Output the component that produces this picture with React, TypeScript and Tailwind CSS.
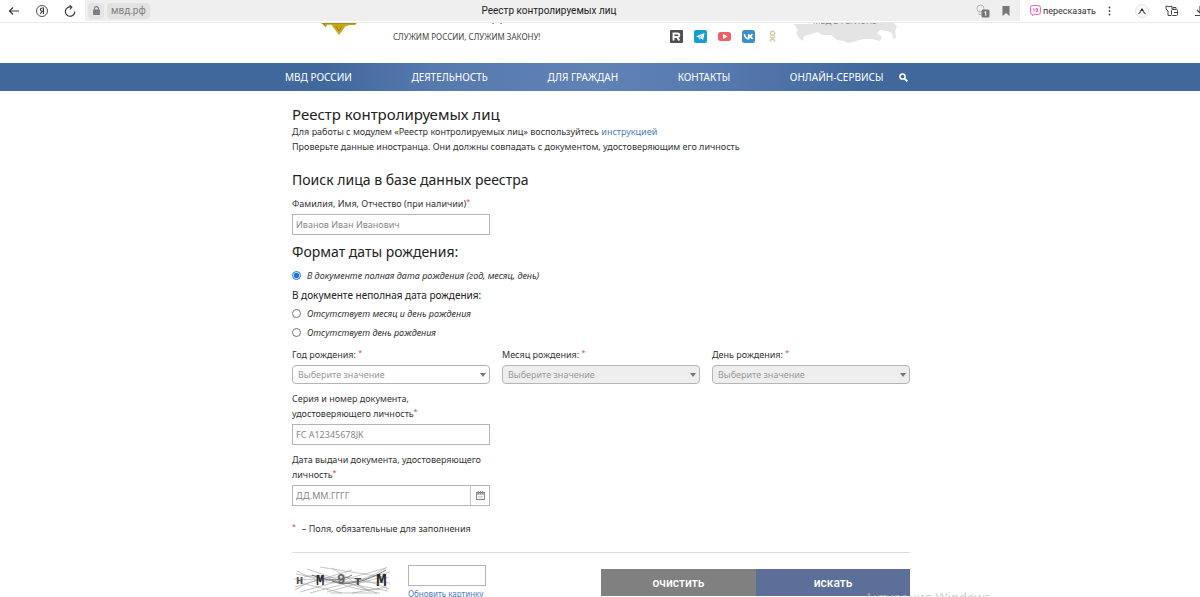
import { useState } from "react";
import type { ReactNode } from "react";

const NAV_ITEMS = ["МВД РОССИИ", "ДЕЯТЕЛЬНОСТЬ", "ДЛЯ ГРАЖДАН", "КОНТАКТЫ", "ОНЛАЙН-СЕРВИСЫ"];

function BrowserBar() {
  return (
    <div className="flex h-[23px] shrink-0 items-start border-b border-[#e9e9e9] bg-white font-['Roboto','Liberation_Sans',sans-serif]">
      <div className="flex h-[21px] w-[85px] shrink-0 items-center gap-4 pl-2 text-[#3c3c3c]">
        <button type="button" aria-label="Назад">
          <svg className="h-3 w-3" viewBox="0 0 12 12" fill="none" stroke="currentColor" strokeWidth="1.2">
            <path d="M11 6H1.5M5 2.5L1.5 6L5 9.500" />
          </svg>
        </button>
        <button type="button" aria-label="Яндекс">
          <svg className="h-3 w-3" viewBox="0 0 12 12" fill="none" stroke="currentColor">
            <circle cx="6" cy="6" r="5.500" strokeWidth="0.9" />
            <path d="M7.400 9V3H6.200C5 3 4.400 3.700 4.400 4.600C4.400 5.600 5.100 6.200 6.200 6.200H7.400M6 6.200L4.300 9" strokeWidth="1.100" />
          </svg>
        </button>
        <button type="button" aria-label="Обновить">
          <svg className="h-3 w-3" viewBox="0 0 12 12" fill="none" stroke="currentColor" strokeWidth="1.200">
            <path d="M10.800 6.500A4.700 4.700 0 1 1 7.500 2.100M5.500 0.300L7.800 2.200L6 4.500" />
          </svg>
        </button>
      </div>
      <div className="flex h-[21px] flex-1 items-center bg-[#efefef] pl-[3px] pr-[10px]">
        <div className="flex w-[90px] items-center gap-[3px]">
          <span className="flex h-4 w-4 items-center justify-center rounded-sm bg-[#e4e4e4]">
            <svg className="h-[9px] w-[7px]" viewBox="0 0 7 9" fill="none">
              <rect y="3.500" width="7" height="5.500" rx="0.800" fill="#7d7d7d" />
              <path d="M1.500 4V2.600a2 2 0 0 1 4 0V4" stroke="#7d7d7d" strokeWidth="1.100" />
            </svg>
          </span>
          <span className="h-4 rounded-sm bg-[#e2e2e2] px-1 text-[10px] leading-4 text-[#808080]">мвд.рф</span>
        </div>
        <div className="flex-1 pr-14 text-center text-[10px] leading-4 text-[#222]">Реестр контролируемых лиц</div>
        <div className="flex w-[34px] items-center justify-between">
          <svg className="h-[14px] w-[14px]" viewBox="0 0 14 14" fill="none">
            <circle cx="4.500" cy="4.500" r="3.500" stroke="#b5b5b5" />
            <path d="M3 8.500v2h3" stroke="#b5b5b5" />
            <rect x="5.500" y="5.500" width="8" height="8" rx="1.500" fill="#777" />
            <path d="M8.500 8.300L9.700 7.500V11.800" stroke="#fff" />
          </svg>
          <svg className="h-[10px] w-[8px]" viewBox="0 0 8 10">
            <path d="M0.500 0H7.500V10L4 7L0.500 10Z" fill="#777" />
          </svg>
        </div>
      </div>
      <div className="flex h-[21px] w-[180px] shrink-0 items-center overflow-hidden text-[#333]">
        <button type="button" className="ml-[10px] flex items-center gap-[2px] text-[9px] leading-4">
          <svg className="h-[11px] w-[11px]" viewBox="0 0 11 11" fill="none" stroke="#e45ab4">
            <path d="M2.500 0.600H8.500Q10.400 0.600 10.400 2.500V7.500Q10.400 9.400 8.500 9.400H4.500L2.500 10.500V9.400Q0.600 9.400 0.600 7.500V2.500Q0.600 0.600 2.500 0.600Z" />
            <path d="M3 4L4 3.500V6.500M6 3.500H7.500V6.500H6V3.500" strokeWidth="0.900" />
          </svg>
          пересказать
        </button>
        <button type="button" aria-label="Меню" className="ml-3">
          <svg className="h-[10px] w-[3px]" viewBox="0 0 3 10" fill="#444">
            <circle cx="1.500" cy="1.500" r="0.900" />
            <circle cx="1.500" cy="5" r="0.900" />
            <circle cx="1.500" cy="8.500" r="0.900" />
          </svg>
        </button>
        <svg className="ml-6 h-[14px] w-[14px] shrink-0" viewBox="0 0 14 14" fill="none">
          <circle cx="7" cy="7" r="6.500" fill="#fafafa" stroke="#e4e4e4" />
          <path d="M3.500 10L6 7.300M10.500 10L8 7.300" stroke="#444" strokeWidth="1.100" />
          <path d="M7 4L9.300 7.500L7 6.800L4.700 7.500Z" fill="#222" />
        </svg>
        <svg className="ml-4 h-[12px] w-[13px] shrink-0" viewBox="0 0 13 12" fill="none" stroke="#444">
          <path d="M1 1Q4 2.500 7 1V4M1 1V4L3 6V10.500H6" />
          <rect x="6.500" y="4.500" width="6" height="6" rx="1" />
          <path d="M8 4.500V2.500H11V4.500M9 7.500H12" />
        </svg>
        <svg className="ml-[17px] h-[12px] w-[10px] shrink-0" viewBox="0 0 10 12" fill="none" stroke="#444" strokeWidth="1.200">
          <path d="M5 1V8M2 5L5 8L8 5M0 10.500H10" />
        </svg>
      </div>
    </div>
  );
}

function SocialLinks() {
  return (
    <div className="flex items-center gap-[11px] pt-[7px]">
      <a href="#rutube" aria-label="Rutube">
        <svg className="h-[13px] w-[13px]" viewBox="0 0 13 13" fill="none">
          <rect width="13" height="13" rx="1" fill="#505050" />
          <path d="M3.500 10.500V3.500H7.500Q9.300 3.500 9.300 5.200Q9.300 7 7.500 7H3.500M7 7L9.300 10.500" stroke="#fff" strokeWidth="1.900" />
        </svg>
      </a>
      <a href="#telegram" aria-label="Telegram">
        <svg className="h-[13px] w-[13px]" viewBox="0 0 13 13">
          <rect width="13" height="13" rx="2" fill="#149fd0" />
          <path d="M2 6.500L10.500 3L9.200 10L6.500 8.300L5.200 9.700L4.800 7.500Z" fill="#fff" />
          <path d="M5 7.300L8.800 4.600L6 7.800Z" fill="#149fd0" />
        </svg>
      </a>
      <a href="#youtube" aria-label="YouTube">
        <svg className="h-[13px] w-[13px]" viewBox="0 0 13 13">
          <rect y="2" width="13" height="9" rx="2.500" fill="#ee6068" />
          <path d="M5 4L9.500 6.500L5 9Z" fill="#fff" />
        </svg>
      </a>
      <a href="#vk" aria-label="ВКонтакте">
        <svg className="h-[13px] w-[13px]" viewBox="0 0 13 13" fill="none">
          <rect width="13" height="13" rx="2.500" fill="#3f8fcb" />
          <path d="M2.300 4.200Q3.300 8.800 6.700 8.800V4.200M10.300 4.200Q9.300 6.200 6.900 6.500Q9.300 6.800 10.700 8.900" stroke="#fff" strokeWidth="1.600" />
        </svg>
      </a>
      <a href="#ok" aria-label="Одноклассники">
        <svg className="h-[13px] w-[13px]" viewBox="0 0 13 13" fill="none" stroke="#dccfa8" strokeWidth="1.600">
          <circle cx="6.500" cy="3.300" r="2.100" />
          <path d="M3.800 6.800Q6.500 8.600 9.200 6.800M6.500 8L3.900 11.500M6.500 8L9.100 11.500" />
        </svg>
      </a>
    </div>
  );
}

function SiteHeader() {
  return (
    <header className="h-10 shrink-0 overflow-hidden bg-white">
      <div className="mx-auto flex w-full max-w-[620px] items-start pl-[2px]">
        <svg className="ml-[29px] h-[13px] w-9 shrink-0" viewBox="0 0 36 13">
          <path d="M0 0.300H36L34 2H29L24.500 3.300L18 12L11.500 3.300L10.500 1.800H6L5 4.500L2.500 2Z" fill="#c9aa12" />
          <path d="M1 0.600H35M3.500 1V3M15 3L18 8L21 3" fill="none" stroke="#8d7c25" strokeWidth="0.800" />
        </svg>
        <div className="ml-9 flex w-[277px] flex-col">
          <svg className="ml-[99px] h-[2px] w-3" viewBox="0 0 12 2" fill="#999">
            <path d="M0 0H2V1H0ZM8 0H10V1H8Z" />
          </svg>
          <p className="pt-[5px] text-[8px] leading-[14px] whitespace-nowrap text-[#444]">СЛУЖИМ РОССИИ, СЛУЖИМ ЗАКОНУ!</p>
        </div>
        <SocialLinks />
        <div className="relative ml-[14px] h-[22px] w-[104px] shrink-0">
          <svg className="h-[22px] w-[104px]" viewBox="0 0 104 22" fill="#e4e4e4">
            <path d="M1 1H26L40 0H101L104 4L102 8L103 15L100 16L99 10L94 8L87 7L84 10L89 14L87 18L79 16L70 16L63 18L55 20L51 18L44 17L38 12L29 12L25 9L18 11L11 13L10 18L6 15L3 10L5 7Z" />
          </svg>
          <span className="absolute -top-2 left-5 text-[8px] leading-[11px] whitespace-nowrap text-[#888]">МВД В РЕГИОНЕ</span>
        </div>
      </div>
    </header>
  );
}

function MainNav() {
  return (
    <nav className="h-7 shrink-0 bg-[linear-gradient(90deg,#40689c_27%,#5679af_36%,#6082b4_50%,#5679af_60%,#40689c_73%)]">
      <div className="mx-auto flex h-7 w-full max-w-[630px] items-center justify-between pr-[7px] text-[10px] text-white">
        {NAV_ITEMS.map((item) => (
          <a key={item} href="#nav" className="whitespace-nowrap">
            {item}
          </a>
        ))}
        <button type="button" aria-label="Поиск" className="-ml-11">
          <svg className="h-[9px] w-[9px]" viewBox="0 0 9 9" fill="none" stroke="#fff">
            <circle cx="3.500" cy="3.500" r="2.600" strokeWidth="1.500" />
            <path d="M5.500 5.500L8.300 8.300" strokeWidth="1.900" />
          </svg>
        </button>
      </div>
    </nav>
  );
}

function Required() {
  return <sup className="text-[7px] text-[#c44]">*</sup>;
}

interface DateSelectProps {
  id: string;
  label: string;
  disabled?: boolean;
}

function DateSelect({ id, label, disabled }: DateSelectProps) {
  return (
    <div>
      <label htmlFor={id} className="block">
        {label} <Required />
      </label>
      <div className="relative mt-[3px]">
        <select
          id={id}
          disabled={disabled}
          defaultValue=""
          className="block h-[19px] w-full appearance-none rounded-sm border border-[#b5b5b5] bg-white px-[5px] text-[#999] disabled:bg-[#eee] disabled:opacity-100"
        >
          <option value="">Выберите значение</option>
        </select>
        <svg className="pointer-events-none absolute top-2 right-1 h-1 w-[6px]" viewBox="0 0 6 4" fill="#777">
          <path d="M0 0H6L3 4Z" />
        </svg>
      </div>
    </div>
  );
}

interface FormatRadioProps {
  value: string;
  current: string;
  onChange: (value: string) => void;
  children: ReactNode;
}

function FormatRadio({ value, current, onChange, children }: FormatRadioProps) {
  return (
    <label className="flex h-[15px] items-center gap-[6px] italic">
      <input
        type="radio"
        name="format"
        checked={current === value}
        onChange={() => onChange(value)}
        className="h-[9px] w-[9px] accent-[#1a73e8]"
      />
      {children}
    </label>
  );
}

function Captcha() {
  return (
    <svg className="h-[30px] w-[100px]" viewBox="0 0 100 30" role="img" aria-label="Код с картинки">
      <g fill="none" stroke="#a0a0a0" strokeWidth="0.600">
        <path d="M4 9L96 26M8 27L94 3M15 4L85 28M3 22L60 5M28 2L97 13M18 28L98 7M2 14L98 18M40 3L78 27M35 27L90 12M5 17L50 28M60 28L95 22" />
        <path d="M5 6C30 20 60 25 95 2M3 25C30 8 60 8 97 24M12 12C40 4 50 30 88 24M38 28H88" />
        <path d="M40 16C55 22 75 16 94 5M20 10C35 17 50 16 60 10" stroke="#666" strokeWidth="0.900" />
      </g>
      <g fill="#2b2b2b" fontFamily="'Liberation Mono', monospace" fontWeight="bold">
        <text x="4" y="19" fontSize="12" fill="#555">н</text>
        <text x="24" y="20" fontSize="14">M</text>
        <text x="45" y="19" fontSize="14" fill="#666">9</text>
        <text x="62" y="20" fontSize="13" fill="#444">т</text>
        <text x="84" y="21" fontSize="18">M</text>
      </g>
    </svg>
  );
}

export default function App() {
  const [format, setFormat] = useState("full");

  return (
    <div className="relative flex h-screen flex-col overflow-hidden bg-white font-['Noto_Sans','Open_Sans',sans-serif]">
      <BrowserBar />
      <SiteHeader />
      <MainNav />
      <main className="mx-auto w-full max-w-[620px] pt-[13px] pl-[2px] text-[9px] leading-[15px] text-[#333]">
        <h1 className="text-[15px] leading-5 text-[#222]">Реестр контролируемых лиц</h1>
        <p>
          Для работы с модулем «Реестр контролируемых лиц» воспользуйтесь{" "}
          <a href="#manual" className="text-[#4a7cc0]">инструкцией</a>
        </p>
        <p>Проверьте данные иностранца. Они должны совпадать с документом, удостоверяющим его личность</p>

        <form onSubmit={(e) => e.preventDefault()}>
          <h2 className="mt-4 text-sm leading-5 text-[#222]">Поиск лица в базе данных реестра</h2>
          <label htmlFor="name" className="mt-[6px] block">
            Фамилия, Имя, Отчество (при наличии)<Required />
          </label>
          <input
            id="name"
            type="text"
            placeholder="Иванов Иван Иванович"
            className="mt-[3px] block h-[21px] w-[198px] border border-[#b5b5b5] px-[3px] placeholder:text-[#888]"
          />

          <h2 className="mt-[7px] text-sm leading-5 text-[#222]">Формат даты рождения:</h2>
          <div className="mt-[6px]">
            <FormatRadio value="full" current={format} onChange={setFormat}>
              В документе полная дата рождения (год, месяц, день)
            </FormatRadio>
          </div>
          <p className="mt-[5px] mb-[3px] text-[10px] text-[#222]">В документе неполная дата рождения:</p>
          <div className="flex flex-col gap-1">
            <FormatRadio value="no-month" current={format} onChange={setFormat}>
              Отсутствует месяц и день рождения
            </FormatRadio>
            <FormatRadio value="no-day" current={format} onChange={setFormat}>
              Отсутствует день рождения
            </FormatRadio>
          </div>

          <div className="mt-[7px] grid grid-cols-3 gap-3">
            <DateSelect id="year" label="Год рождения:" />
            <DateSelect id="month" label="Месяц рождения:" disabled />
            <DateSelect id="day" label="День рождения:" disabled />
          </div>

          <label htmlFor="doc" className="mt-[7px] block w-[198px]">
            Серия и номер документа, удостоверяющего личность<Required />
          </label>
          <input
            id="doc"
            type="text"
            placeholder="FC A12345678JK"
            className="mt-[3px] block h-[21px] w-[198px] border border-[#b5b5b5] px-[3px] placeholder:text-[#888]"
          />

          <label htmlFor="issued" className="mt-[7px] block w-[198px]">
            Дата выдачи документа, удостоверяющего личность<Required />
          </label>
          <div className="mt-[3px] flex h-[21px] w-[198px] border border-[#b5b5b5]">
            <input id="issued" type="text" placeholder="ДД.ММ.ГГГГ" className="min-w-0 flex-1 px-[3px] placeholder:text-[#888]" />
            <button type="button" aria-label="Календарь" className="flex w-[19px] items-center justify-center border-l border-[#c5c5c5]">
              <svg className="h-[9px] w-[9px]" viewBox="0 0 9 9" fill="none" stroke="#888">
                <rect x="0.500" y="1.500" width="8" height="7" />
                <path d="M1 3H8M2.500 0V2.500M4.500 0V2.500M6.500 0V2.500" strokeWidth="1.100" />
                <path d="M2 5.500H7M2 7H7" stroke="#bbb" strokeWidth="0.700" />
              </svg>
            </button>
          </div>

          <p className="mt-[15px]">
            <span className="mr-[6px]"><Required /></span>– Поля, обязательные для заполнения
          </p>

          <div className="mt-4 flex items-start border-t border-[#ddd] pt-3">
            <Captcha />
            <div className="ml-4">
              <input type="text" aria-label="Код с картинки" className="block h-[21px] w-[78px] border border-[#b5b5b5] px-1" />
              <a href="#refresh" className="block text-[8px] leading-[15px] text-[#4a7cc0]">Обновить картинку</a>
            </div>
            <div className="mt-1 ml-auto flex font-['Roboto','Liberation_Sans',sans-serif] text-xs font-medium text-white">
              <button type="reset" className="h-[27px] w-[155px] bg-[#808080]">очистить</button>
              <button type="submit" className="h-[27px] w-[154px] bg-[#5b6f98]">искать</button>
            </div>
          </div>
        </form>
      </main>
      <div className="pointer-events-none absolute right-[209px] -bottom-2 text-[13px] leading-4 text-[#b9b9b9]/70">
        Активация Windows
      </div>
    </div>
  );
}
